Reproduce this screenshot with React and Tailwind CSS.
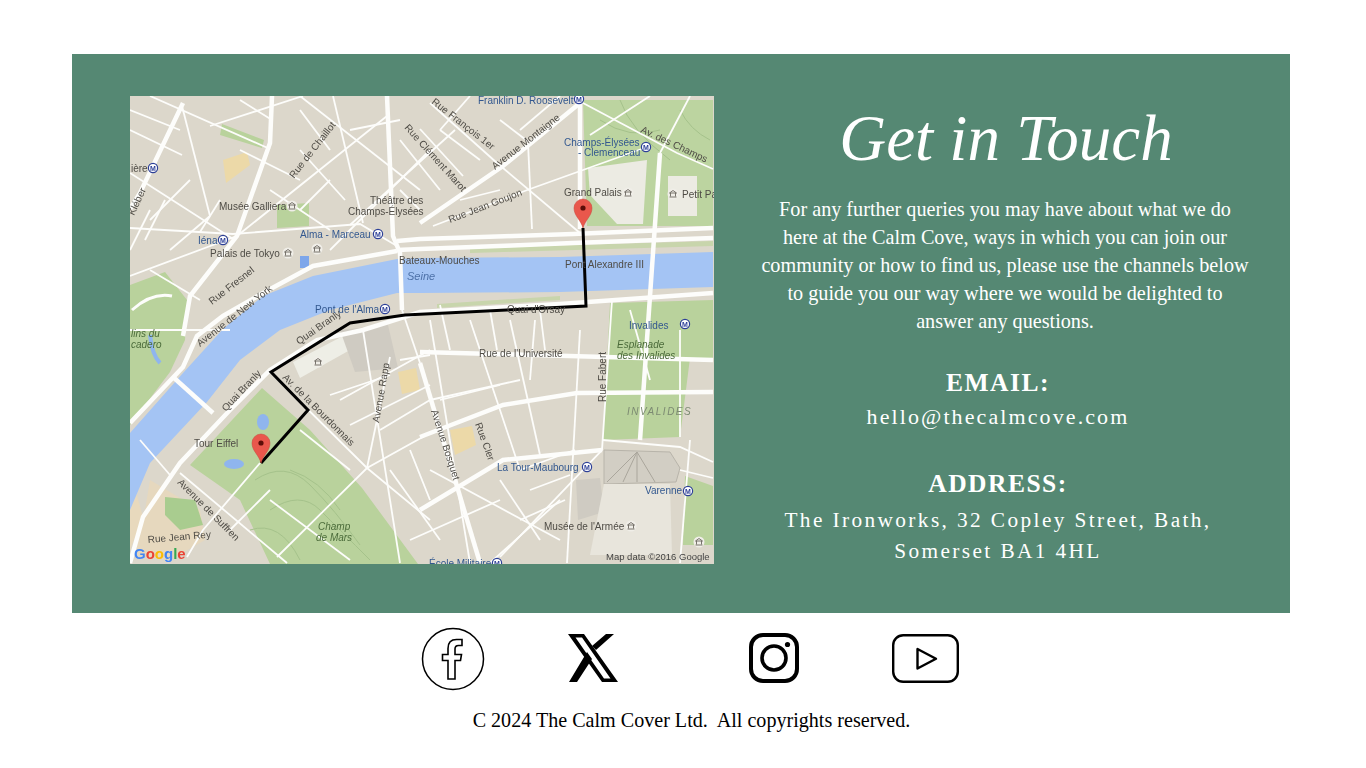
const MAJOR = [
  [[397, 251], [313, 266], [263, 293], [223, 316], [197, 336], [183, 367], [130, 423]],
  [[130, 563], [143, 517], [180, 463], [230, 410], [270, 370], [317, 340], [363, 330], [420, 312], [560, 304], [713, 293]],
  [[397, 241], [420, 239], [573, 234], [713, 228]],
  [[397, 250], [420, 249], [573, 243], [713, 238]],
  [[272, 96], [270, 143], [237, 236], [190, 296], [183, 336]],
  [[183, 103], [140, 193], [130, 209]],
  [[420, 223], [503, 166], [580, 103]],
  [[387, 96], [393, 236], [400, 253], [402, 310]],
  [[420, 363], [480, 563]],
  [[580, 96], [580, 229]],
  [[660, 153], [650, 296], [640, 440]],
  [[173, 377], [213, 413]],
  [[420, 352], [713, 360]],
  [[420, 437], [503, 405], [577, 393], [713, 392]],
  [[420, 510], [503, 460], [602, 450]],
]

const MINOR = [
  [[130, 173], [233, 239]], [[182, 106], [210, 216]], [[150, 96], [270, 149]], [[210, 126], [303, 96]],
  [[130, 228], [233, 234], [360, 224], [397, 246]], [[130, 276], [237, 236]], [[237, 236], [387, 116]],
  [[333, 96], [363, 223]], [[300, 96], [420, 190]], [[497, 163], [580, 233]], [[433, 226], [530, 189], [650, 146]],
  [[532, 229], [528, 143]], [[430, 103], [497, 163]], [[420, 129], [463, 176]], [[583, 103], [677, 153], [713, 169]],
  [[580, 330], [567, 563]], [[612, 300], [602, 450], [500, 557]], [[603, 440], [680, 447], [713, 462]],
  [[430, 433], [367, 468], [277, 557]], [[390, 357], [367, 468]], [[270, 372], [367, 468], [430, 520]],
  [[180, 473], [287, 563]], [[260, 463], [203, 530], [187, 557]], [[402, 310], [420, 363]],
  [[363, 330], [400, 563]], [[430, 320], [470, 563]], [[470, 320], [520, 470]], [[510, 320], [540, 455]],
  [[430, 470], [560, 540]], [[490, 563], [560, 500]], [[680, 330], [680, 437]], [[690, 440], [680, 563]],
  [[230, 330], [130, 330]], [[430, 150], [330, 250]], [[455, 130], [350, 225]], [[300, 150], [345, 200]],
  [[130, 130], [182, 155]], [[240, 150], [300, 180]], [[430, 400], [520, 380]], [[410, 540], [500, 500]],
  [[470, 96], [440, 130]], [[560, 96], [520, 130]], [[590, 135], [650, 96]], [[690, 96], [660, 153]],
  [[270, 500], [350, 560]], [[300, 430], [350, 470]], [[340, 400], [430, 350]], [[380, 430], [430, 400]],
  [[150, 210], [130, 250]], [[165, 200], [145, 240]], [[190, 180], [150, 220]], [[210, 216], [170, 250]],
  [[270, 190], [330, 230]], [[300, 110], [330, 150]], [[330, 180], [300, 210]], [[350, 130], [400, 120]],
  [[400, 140], [440, 190]], [[400, 190], [420, 210]], [[440, 130], [480, 160]], [[500, 120], [530, 143]],
  [[460, 200], [500, 190]], [[630, 310], [650, 380]], [[440, 400], [500, 385]], [[530, 380], [535, 320]],
  [[400, 360], [430, 355]], [[390, 470], [440, 540]], [[330, 395], [390, 375]], [[350, 425], [430, 385]],
  [[410, 450], [430, 500]], [[500, 480], [540, 540]], [[520, 470], [575, 450]], [[530, 490], [570, 475]],
  [[520, 520], [565, 500]], [[140, 440], [170, 475]], [[230, 530], [270, 490]], [[440, 305], [450, 350]],
  [[490, 310], [497, 350]], [[540, 310], [545, 350]], [[680, 470], [713, 478]], [[220, 200], [200, 232]],
  [[130, 110], [180, 130]], [[240, 100], [272, 120]], [[150, 270], [200, 300]],
]

const LABELS = [
  ['Musée Galliera', 219, 210, 0], ['Théâtre des', 370, 204, 0], ['Champs-Élysées', 348, 215, 0],
  ['Palais de Tokyo', 210, 257, 0], ['Rue Fresnel', 212, 305, -38], ['Avenue de New York', 200, 347, -38],
  ['Rue de Chaillot', 294, 179, -52], ['Rue Jean Goujon', 450, 223, -21], ['Avenue Montaigne', 495, 170, -38],
  ['Rue François 1er', 431, 103, 38], ['Rue Clément Marot', 404, 128, 48], ['Grand Palais', 564, 196, 0],
  ['Av. des Champs', 640, 132, 25], ['Petit Pa', 682, 198, 0], ['Bateaux-Mouches', 399, 264, 0],
  ['Pont Alexandre III', 565, 268, 0], ['Quai d\'Orsay', 507, 313, 0], ['Rue de l\'Université', 479, 357, 0],
  ['Rue Fabert', 606, 402, -90], ['Avenue Rapp', 379, 423, -80], ['Avenue Bosquet', 431, 411, 72],
  ['Rue Cler', 475, 424, 70], ['Musée de l\'Armée', 544, 530, 0], ['Quai Branly', 226, 412, -47],
  ['Quai Branly', 299, 345, -35], ['Av. de la Bourdonnais', 282, 378, 45], ['Tour Eiffel', 194, 447, 0],
  ['Avenue de Suffren', 177, 483, 45], ['Rue Jean Rey', 148, 543, -5], ['Kléber', 134, 216, -65],
  ['ière', 131, 172, 0],
]

const METRO_LABELS = [
  ['Franklin D. Roosevelt', 478, 104], ['Champs-Élysées', 564, 146], ['- Clemenceau', 578, 156],
  ['Alma - Marceau', 300, 238], ['Iéna', 198, 244], ['Pont de l\'Alma', 315, 313], ['Invalides', 629, 329],
  ['La Tour-Maubourg', 497, 471], ['Varenne', 645, 494], ['École Militaire', 429, 567],
]

const METROS = [
  [153, 168], [223, 240], [378, 234], [579, 99], [646, 147], [385, 309], [685, 324], [587, 467], [688, 491], [497, 563],
]

const MUSEUMS = [[292, 206], [288, 253], [317, 249], [628, 193], [673, 194], [318, 362], [631, 526], [699, 542]]

function polyline(points) {
  return points.map((p) => p.join(',')).join(' ')
}

function Pin({ x, y }) {
  return (
    <g>
      <path
        d={`M${x} ${y}c-2-8-9-12-9-20a9 9 0 0 1 18 0c0 8-7 12-9 20z`}
        fill="#e9574c"
        stroke="#c9443a"
        strokeWidth="0.5"
      />
      <circle cx={x} cy={y - 20} r="2.6" fill="#5c0d08" />
    </g>
  )
}

function MapPicture() {
  return (
    <svg viewBox="130 96 584 468" className="w-[584px] h-[468px] shrink-0 blur-[0.4px]">
      <rect x="130" y="96" width="584" height="468" fill="#dcd7cb" />

      {/* parks */}
      <polygon points="130,285 165,272 187,300 185,340 170,372 130,425" fill="#b9d29c" />
      <polygon points="262,388 310,430 362,488 418,564 270,564 240,500 190,465" fill="#b9d29c" />
      <polygon points="583,100 713,100 713,226 587,226" fill="#bcd4a0" />
      <polygon points="610,303 713,300 713,358 690,358 680,437 603,440" fill="#b9d29c" />
      <polygon points="685,476 713,486 713,545 683,545" fill="#b9d29c" />
      <polygon points="470,248 713,241 713,246 470,253" fill="#c8d5ac" />
      <polygon points="437,304 560,296 560,300 437,308" fill="#c8d5ac" />
      <polygon points="222,124 264,140 262,148 220,135" fill="#b9d29c" />
      <polygon points="277,205 309,203 309,226 277,228" fill="#b9d29c" />
      <polygon points="130,470 143,517 130,550" fill="#e8d9bd" />
      <polygon points="150,480 200,510 205,540 170,560 135,555 145,510" fill="#e6d8be" />
      <polygon points="165,497 195,500 203,525 180,530 165,515" fill="#a9cc8f" />
      <polygon points="293,362 345,335 350,350 300,378" fill="#eeeee6" />

      {/* buildings and sand */}
      <polygon points="588,168 647,160 643,224 617,224 590,195" fill="#ecebe3" />
      <polygon points="668,176 697,176 697,216 668,216" fill="#ecebe3" />
      <polygon points="223,160 247,152 250,165 226,183" fill="#ecd9a8" />
      <polygon points="450,430 472,426 476,445 455,455" fill="#ecd9a8" />
      <polygon points="398,372 416,368 420,390 402,394" fill="#ecd9a8" />
      <polygon points="340,330 388,325 398,368 355,372" fill="#cfcbc2" />
      <polygon points="576,480 600,478 604,512 578,520" fill="#cfcbc2" />
      <polygon points="604,450 670,452 680,468 676,482 604,484" fill="#d2cec4" stroke="#b8b4aa" />
      <path d="M637 452l-30 30M637 452l-14 30M637 452v30M637 452l18 30" fill="none" stroke="#aaa69c" />
      <polygon points="604,484 670,484 672,555 590,555" fill="#e8e5dc" />

      {/* Seine */}
      <polygon
        points="130,433 183,373 223,329 263,296 313,276 397,259 420,258 560,257 713,252 713,287 560,292 420,293 397,293 330,310 280,330 240,360 207,402 150,463 130,510"
        fill="#a4c4f4"
      />
      <ellipse cx="234" cy="464" rx="10" ry="5" fill="#8fb5ee" />
      <ellipse cx="263" cy="422" rx="6" ry="8" fill="#8fb5ee" />
      <path d="M150 335q2 20 10 28" fill="none" stroke="#8fb5ee" strokeWidth="4" />
      <rect x="300" y="256" width="9" height="12" fill="#7da6ea" />

      {/* park paths */}
      <g fill="none" stroke="#a5c28b" strokeWidth="1">
        <path d="M255 480q30-20 55 5t50 60M270 510q30-20 50 0t50 50M290 470q30 10 50 40M250 530q30-10 50 30" />
        <path d="M600 120q30 20 60 10M620 100q10 30 50 60M680 110q10 20 30 30" />
      </g>
      <path d="M132 310q20-18 40-14" fill="none" stroke="#fdfdfb" strokeWidth="3" />

      {/* streets */}
      {MAJOR.map((s, i) => (
        <polyline key={i} points={polyline(s)} fill="none" stroke="#fdfdfb" strokeWidth="4.5" />
      ))}
      {MINOR.map((s, i) => (
        <polyline key={i} points={polyline(s)} fill="none" stroke="#fdfdfb" strokeWidth="1.8" />
      ))}

      {/* route */}
      <polyline
        points="583,228 586,306 405,315 350,323 271,372 308,410 261,463"
        fill="none"
        stroke="#000"
        strokeWidth="3"
      />

      {/* labels */}
      <g className="font-['Liberation_Sans',sans-serif]" fontSize="10" fill="#4f4c46">
        {LABELS.map(([t, x, y, r], i) => (
          <text key={i} x={x} y={y} transform={`rotate(${r} ${x} ${y})`}>
            {t}
          </text>
        ))}
        <text x="407" y="280" fontStyle="italic" fontSize="11" fill="#4d71a8">Seine</text>
        <text x="617" y="348" fontStyle="italic" fill="#4b6b3a">Esplanade</text>
        <text x="617" y="359" fontStyle="italic" fill="#4b6b3a">des Invalides</text>
        <text x="627" y="415" fontStyle="italic" letterSpacing="1.5" fill="#7c8a72">INVALIDES</text>
        <text x="318" y="530" fontStyle="italic" fill="#4b6b3a">Champ</text>
        <text x="316" y="541" fontStyle="italic" fill="#4b6b3a">de Mars</text>
        <text x="131" y="337" fontStyle="italic" fill="#4b6b3a">lins du</text>
        <text x="131" y="348" fontStyle="italic" fill="#4b6b3a">cadero</text>
        {METRO_LABELS.map(([t, x, y], i) => (
          <text key={i} x={x} y={y} fill="#33588f">
            {t}
          </text>
        ))}
        <text x="606" y="560" fontSize="9.5" fill="#444">Map data ©2016 Google</text>
      </g>

      {METROS.map(([x, y], i) => (
        <g key={i}>
          <circle cx={x} cy={y} r="4.6" fill="#fff" stroke="#2c3f97" strokeWidth="1.2" />
          <text x={x} y={y + 2.6} textAnchor="middle" fontSize="7" fontWeight="700" fill="#2c3f97" fontFamily="Liberation Sans, sans-serif">
            M
          </text>
        </g>
      ))}

      {MUSEUMS.map(([x, y], i) => (
        <g key={i} fill="none" stroke="#6b6760" strokeWidth="0.9">
          <circle cx={x} cy={y} r="5.5" fill="#f0eee8" stroke="none" />
          <path d={`M${x - 3.5} ${y - 1}l3.5-2.5 3.5 2.5zM${x - 2.5} ${y - 1}v3.5M${x + 2.5} ${y - 1}v3.5M${x - 3.5} ${y + 3}h7`} />
        </g>
      ))}

      <g className="font-['Liberation_Sans',sans-serif]" fontSize="15" fontWeight="700">
        <text x="134" y="559">
          <tspan fill="#4285f4">G</tspan>
          <tspan fill="#ea4335">o</tspan>
          <tspan fill="#fbbc05">o</tspan>
          <tspan fill="#4285f4">g</tspan>
          <tspan fill="#34a853">l</tspan>
          <tspan fill="#ea4335">e</tspan>
        </text>
      </g>

      <Pin x={583} y={228} />
      <Pin x={261} y={463} />
    </svg>
  )
}

function Socials() {
  return (
    <div className="flex items-center h-[64px] mt-[14px] pl-[421px]">
      <svg width="64" height="64" viewBox="0 0 64 64" fill="none" stroke="#000">
        <circle cx="32" cy="32" r="30.5" strokeWidth="1.5" />
        <path
          d="M27 52V33.5h-5.5v-6H27v-6c0-6 3-9 8.5-9H41v6h-3.5c-2.5 0-3.5 1-3.5 3.5v5.5h6.5l-1 6H34V52z"
          strokeWidth="1.6"
        />
      </svg>
      <svg width="50" height="48" viewBox="0 0 50 48" className="ml-[83px] -mt-[2px]">
        <path fillRule="evenodd" d="M0 0h16L50 48H34zM7.5 3.5 36 44.5h6.5L14 3.5z" fill="#000" />
        <path d="M19 18 1 48h8l15-23zM28 16 46 0h-8L24 12z" fill="#000" />
      </svg>
      <svg width="50" height="50" viewBox="0 0 50 50" fill="none" stroke="#000" className="ml-[131px] -mt-[2px]">
        <rect x="2" y="2" width="46" height="46" rx="12" strokeWidth="4" />
        <circle cx="25" cy="25" r="12" strokeWidth="3.6" />
        <circle cx="38.5" cy="11.5" r="2.6" fill="#000" stroke="none" />
      </svg>
      <svg width="67" height="49" viewBox="0 0 67 49" fill="none" stroke="#000" className="ml-[93px] -mt-[2px]">
        <rect x="1.2" y="1.2" width="64.6" height="46.6" rx="10" strokeWidth="2.4" />
        <path d="M25.5 15v19.5L44 24.7z" strokeWidth="2.4" strokeLinejoin="round" />
      </svg>
    </div>
  )
}

export default function App() {
  return (
    <div className="h-screen bg-white pt-[54px] font-['Liberation_Serif',serif] overflow-hidden">
      <div className="ml-[72px] w-[1218px] h-[559px] bg-[#558873] flex pl-[58px] pt-[42px] text-white">
        <MapPicture />

        <div className="w-[492px] ml-[45px] text-center">
          <h1 className="text-[65px] leading-[80px] italic mt-[2px] ml-[2px]">Get in Touch</h1>

          <p className="text-[20.2px] leading-[28px] mt-[17px] whitespace-nowrap">
            For any further queries you may have about what we do
            <br />
            here at the Calm Cove, ways in which you can join our
            <br />
            community or how to find us, please use the channels below
            <br />
            to guide you our way where we would be delighted to
            <br />
            answer any questions.
          </p>

          <div className="mr-[14px]">
            <h2 className="text-[25.5px] leading-[30px] font-bold tracking-[1.5px] mt-[33px]">EMAIL:</h2>
            <p className="text-[22px] leading-[30px] tracking-[2.1px] mt-[4px]">hello@thecalmcove.com</p>

            <h2 className="text-[25.5px] leading-[30px] font-bold tracking-[1.5px] mt-[37px]">ADDRESS:</h2>
            <p className="text-[21.3px] leading-[31px] tracking-[2.4px] mt-[6px] whitespace-nowrap">
              The Ironworks, 32 Copley Street, Bath,
              <br />
              Somerset BA1 4HL
            </p>
          </div>
        </div>
      </div>

      <Socials />

      <p className="text-[20.1px] leading-[26px] text-black text-center mt-[16px] pl-[17px] whitespace-pre">
        C 2024 The Calm Cover Ltd.  All copyrights reserved.
      </p>
    </div>
  )
}
